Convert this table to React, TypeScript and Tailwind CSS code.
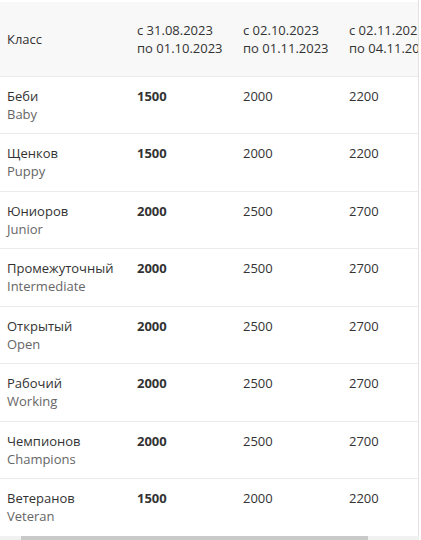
const ROWS = [
  { ru: 'Беби', en: 'Baby', a: '1500', b: '2000', c: '2200' },
  { ru: 'Щенков', en: 'Puppy', a: '1500', b: '2000', c: '2200' },
  { ru: 'Юниоров', en: 'Junior', a: '2000', b: '2500', c: '2700' },
  { ru: 'Промежуточный', en: 'Intermediate', a: '2000', b: '2500', c: '2700' },
  { ru: 'Открытый', en: 'Open', a: '2000', b: '2500', c: '2700' },
  { ru: 'Рабочий', en: 'Working', a: '2000', b: '2500', c: '2700' },
  { ru: 'Чемпионов', en: 'Champions', a: '2000', b: '2500', c: '2700' },
  { ru: 'Ветеранов', en: 'Veteran', a: '1500', b: '2000', c: '2200' },
]

export default function App() {
  return (
    <div
      className="w-[421px] h-[540px] bg-white overflow-hidden text-[13px] leading-[18px] text-[#333]"
      style={{ fontFamily: '"Open Sans", "Liberation Sans", sans-serif' }}
    >
      {/* the last column is cut by the scroll area, as in the page */}
      <div className="w-[419px] h-[536px] border-r border-[#e2e2e2] overflow-hidden">
        <table className="w-[560px] border-collapse">
          <thead>
            <tr className="h-[75px] bg-[#f8f8f8] border-t-2 border-white">
              <th className="w-[130px] text-left font-normal px-[7px] align-middle">Класс</th>
              <th className="w-[106px] text-left font-normal px-[7px] align-middle">
                с 31.08.2023<br />по 01.10.2023
              </th>
              <th className="w-[106px] text-left font-normal px-[7px] align-middle">
                с 02.10.2023<br />по 01.11.2023
              </th>
              <th className="w-[106px] text-left font-normal px-[7px] align-middle whitespace-nowrap">
                с 02.11.2023<br />по 04.11.2023
              </th>
              <th className="text-left font-normal px-[7px]"></th>
            </tr>
          </thead>
          <tbody>
            {ROWS.map((r) => (
              <tr key={r.en} className="h-[57.5px] border-t border-[#ebebeb]">
                <td className="px-[7px] pt-[10px] align-top">
                  <div>{r.ru}</div>
                  <div className="text-[#666]">{r.en}</div>
                </td>
                <td className="px-[7px] pt-[10px] align-top font-bold">{r.a}</td>
                <td className="px-[7px] pt-[10px] align-top">{r.b}</td>
                <td className="px-[7px] pt-[10px] align-top">{r.c}</td>
                <td></td>
              </tr>
            ))}
          </tbody>
        </table>
      </div>
      <div className="h-[4px] w-[419px] bg-[#f1f1f1] flex">
        <div className="w-[21px]" />
        <div className="w-[347px] bg-[#c9c9c9]" />
      </div>
    </div>
  )
}
